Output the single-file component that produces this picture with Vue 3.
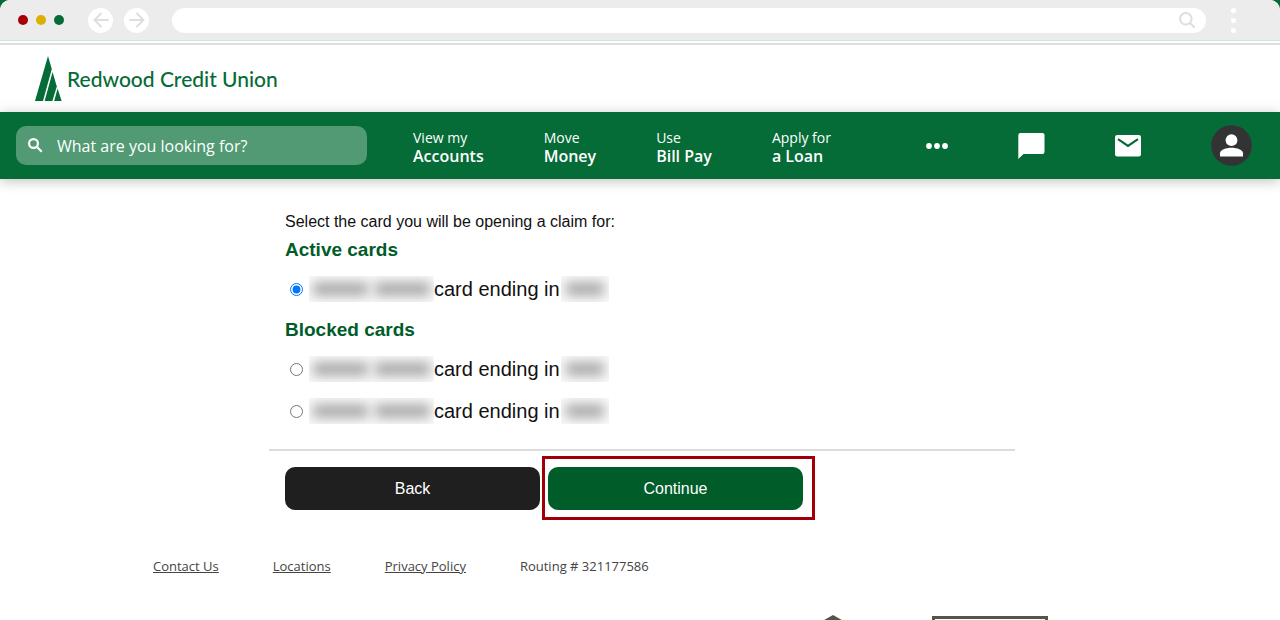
<script setup>
import { ref } from 'vue'

const menu = [
  { top: 'View my', main: 'Accounts' },
  { top: 'Move', main: 'Money' },
  { top: 'Use', main: 'Bill Pay' },
  { top: 'Apply for', main: 'a Loan' },
]

const groups = [
  { title: 'Active cards', cards: ['active-1'] },
  { title: 'Blocked cards', cards: ['blocked-1', 'blocked-2'] },
]

const selected = ref('active-1')
const footerLinks = ['Contact Us', 'Locations', 'Privacy Policy']
</script>

<template>
  <div class="window">
    <div class="chrome">
      <div class="lights"><i class="red"></i><i class="yellow"></i><i class="green"></i></div>
      <div class="history">
        <button type="button" aria-label="Go back">
          <svg width="16" height="16" viewBox="0 0 16 16"><path d="M15 8H1.5M8 1.5L1.5 8L8 14.5" /></svg>
        </button>
        <button type="button" aria-label="Go forward">
          <svg width="16" height="16" viewBox="0 0 16 16"><path d="M1 8H14.5M8 1.5L14.5 8L8 14.5" /></svg>
        </button>
      </div>
      <div class="address">
        <input type="text" aria-label="Address" />
        <svg width="16" height="16" viewBox="0 0 16 16"><circle cx="6.8" cy="6.8" r="5.8" /><path d="M11 11L15.3 15.3" /></svg>
      </div>
      <button type="button" class="kebab" aria-label="Browser menu"><i></i><i></i><i></i></button>
    </div>

    <header class="brand">
      <a href="#" class="logo">
        <svg width="27" height="46" viewBox="0 0 27 46">
          <path d="M13 0L16.8 13L8 45H0Z" />
          <path d="M17.6 16L21.8 30.5L17.4 45H9.6Z" />
          <path d="M22.6 32.5L26.6 45H19.2Z" />
        </svg>
        <span>Redwood Credit Union</span>
      </a>
    </header>

    <nav class="nav">
      <label class="search">
        <svg width="15" height="15" viewBox="0 0 15 15"><circle cx="5.5" cy="5.5" r="4.4" /><path d="M8.8 8.8L13.7 13.7" /></svg>
        <input type="text" placeholder="What are you looking for?" aria-label="What are you looking for?" />
      </label>
      <div class="menu">
        <a v-for="m in menu" :key="m.main" href="#">{{ m.top }}<b>{{ m.main }}</b></a>
      </div>
      <div class="actions">
        <button type="button" aria-label="More">
          <svg width="22" height="6" viewBox="0 0 22 6"><circle cx="3" cy="3" r="2.9" /><circle cx="11" cy="3" r="2.9" /><circle cx="19" cy="3" r="2.9" /></svg>
        </button>
        <button type="button" aria-label="Chat">
          <svg width="27" height="26" viewBox="0 0 27 26"><path d="M2.5 0H24.5Q26.5 0 26.5 2V19Q26.5 21 24.5 21H5.5L0.3 26V2.2Q0.3 0 2.5 0Z" /></svg>
        </button>
        <button type="button" aria-label="Messages">
          <svg width="26" height="22" viewBox="0 0 26 22"><rect width="26" height="21.5" rx="2.2" /><path class="flap" d="M3 4.2L13 11L23 4.2" /></svg>
        </button>
        <button type="button" aria-label="Profile">
          <svg width="41" height="41" viewBox="0 0 41 41"><circle class="disc" cx="20.5" cy="20.5" r="20.3" /><circle cx="20.5" cy="15.2" r="5.9" /><path d="M9 31.5V28.3C9 25 15 22.8 20.5 22.8S32 25 32 28.3V31.5Z" /></svg>
        </button>
      </div>
    </nav>

    <main class="main">
      <form class="claim" @submit.prevent>
        <div class="choices">
          <p>Select the card you will be opening a claim for:</p>
          <section v-for="g in groups" :key="g.title">
            <h2>{{ g.title }}</h2>
            <label v-for="c in g.cards" :key="c" class="card">
              <input v-model="selected" type="radio" name="card" :value="c" />
              <span class="mask holder"><i></i><i></i></span>
              <span>card ending in</span>
              <span class="mask digits"><i></i></span>
            </label>
          </section>
        </div>
        <div class="buttons">
          <button type="button" class="back">Back</button>
          <div class="highlight"><button type="submit" class="continue">Continue</button></div>
        </div>
      </form>
    </main>

    <footer class="footer">
      <div class="links">
        <a v-for="l in footerLinks" :key="l" href="#">{{ l }}</a>
        <span>Routing # 321177586</span>
      </div>
      <div class="badges">
        <svg width="60" height="40" viewBox="0 0 60 40"><path d="M30 0L60 17V24H55V40H5V24H0V17Z" /></svg>
        <div class="insured"></div>
      </div>
    </footer>
  </div>
</template>

<style>
body { background: #056b37; }
</style>

<style scoped>
* { box-sizing: border-box; }
button { border: 0; padding: 0; font: inherit; cursor: pointer; background: none; }
svg { display: block; }
.window { height: 100vh; overflow: hidden; background: #fff; border-radius: 10px 10px 0 0; font-family: "Open Sans", sans-serif; }

.chrome { display: flex; align-items: center; height: 41px; padding: 0 44px 0 17px; background: #ececec; border-bottom: 1px solid #d0e5db; }
.lights { display: flex; gap: 8px; margin-right: 24px; }
.lights i { width: 10px; height: 10px; border-radius: 50%; }
.lights { padding-left: 1px; }
.red { background: #a50006; }
.yellow { background: #dcb000; }
.green { background: #056b37; }
.history { display: flex; gap: 11px; margin-right: 23px; }
.history button { display: flex; align-items: center; justify-content: center; width: 25px; height: 25px; border-radius: 50%; background: #fff; }
.history path, .address svg { fill: none; stroke: #dedede; stroke-width: 2; stroke-linecap: round; stroke-linejoin: round; }
.address { display: flex; align-items: center; flex: 1; height: 25px; padding: 0 11px 0 16px; border-radius: 13px; background: #fff; }
.address input { flex: 1; min-width: 0; border: 0; outline: 0; background: none; }
.kebab { display: flex; flex-direction: column; gap: 5px; margin-left: 25px; }
.kebab i { width: 5px; height: 5px; border-radius: 50%; background: #fff; }

.brand { margin-top: 2px; height: 69px; padding: 11px 35px; border-top: 2px solid #dedede; }
.logo { display: inline-flex; align-items: center; gap: 5px; color: #056b37; font: 500 21px/46px Lato, sans-serif; text-decoration: none; }
.logo svg { fill: #056b37; }

.nav { position: relative; display: flex; align-items: center; height: 67px; padding: 0 28px 0 16px; background: #056b37; color: #fff; box-shadow: 0 2px 12px rgba(0, 0, 0, .25); }
.search { display: flex; align-items: center; gap: 14px; width: 351px; height: 39px; margin-right: 46px; padding: 0 12px; border-radius: 10px; background: #519a74; }
.search svg { fill: none; stroke: #fff; stroke-width: 2.2; }
.search input { flex: 1; min-width: 0; padding: 0; border: 0; outline: 0; background: none; color: #fff; font: 500 16px/22px "Open Sans", sans-serif; }
.search input::placeholder { color: #fff; opacity: 1; }
.menu { display: flex; gap: 60px; padding-top: 2px; }
.menu a { color: #fff; font-size: 14px; line-height: 19px; text-decoration: none; white-space: nowrap; }
.menu b { display: block; font-size: 16px; font-weight: 600; }
.actions { display: flex; align-items: center; gap: 70px; margin-left: auto; }
.actions svg { fill: #fff; }
.actions .flap { fill: none; stroke: #056b37; stroke-width: 2.2; }
.actions .disc { fill: #333; }

.main { padding-left: 4px; font-family: "Liberation Sans", Arial, sans-serif; color: #111; }
.claim { max-width: 746px; margin: 0 auto; padding-top: 34px; }
.choices { padding: 0 16px; border-bottom: 2px solid #dcdcdc; padding-bottom: 16px; }
.choices p { margin: 0; font-size: 16px; line-height: 18px; }
h2 { margin: 0; color: #005c29; font-size: 19px; line-height: 38px; }
.card { display: flex; align-items: center; height: 42px; padding-bottom: 2px; font-size: 20px; }
.card input { width: 13px; height: 13px; margin: 0 6px 0 5px; }
.mask { display: flex; align-items: center; gap: 7px; height: 26px; overflow: hidden; background: #fafafa; }
.mask i { height: 14px; background: #aaa; filter: blur(6px); flex: 1; }
.holder { width: 125px; padding: 0 4px; }
.digits { width: 48px; margin-left: 1px; padding: 0 5px; }
.buttons { display: flex; align-items: center; gap: 2px; padding: 5px 16px 0; }
.buttons button { width: 255px; height: 43px; border-radius: 10px; color: #fff; font-size: 16px; line-height: 43px; }
.back { background: #1f1f1f; }
.continue { background: #005c29; }
.highlight { padding: 8px 9px 7px 3px; border: 3px solid #a00005; }

.footer { padding: 36px 153px 0; color: #444; font-size: 13px; line-height: 20px; }
.links { display: flex; gap: 54px; }
.links a { color: #444; }
.badges { display: flex; justify-content: flex-end; gap: 69px; padding: 39px 79px 0 0; }
.badges svg { fill: #57534a; }
.insured { width: 116px; height: 50px; margin-top: 1px; border: 3px solid #57534a; background: #fff; }
</style>
